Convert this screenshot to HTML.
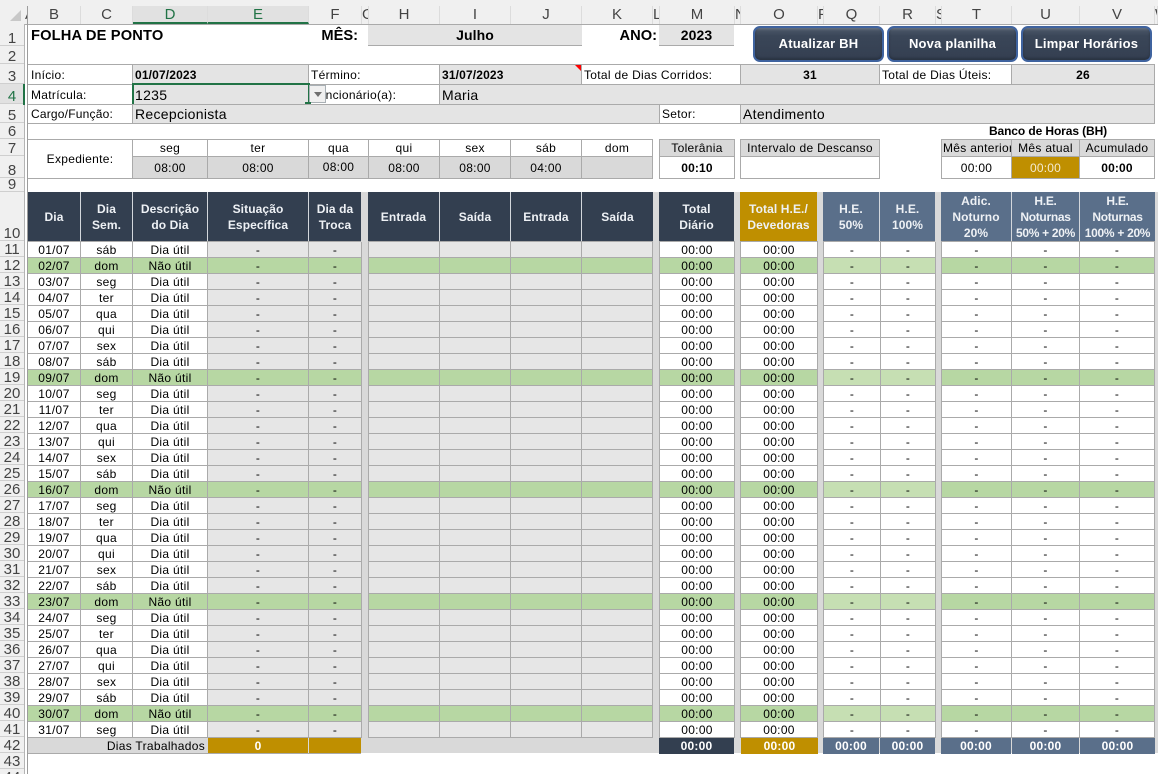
<!DOCTYPE html>
<html lang="pt-BR"><head><meta charset="utf-8"><title>Folha de Ponto</title>
<style>
html{margin:0;padding:0;background:#fff;width:1158px;height:774px;overflow:hidden}
body{margin:0;padding:0;background:#fff;position:relative;width:1158px;height:774px;overflow:hidden;font:12px "Liberation Sans",Arial,sans-serif;letter-spacing:.3px;color:#000}
.c{position:absolute;box-sizing:border-box;display:flex;align-items:center;justify-content:center;text-align:center;white-space:nowrap;overflow:hidden;line-height:16px}
.l{justify-content:flex-start;padding-left:2px}
.r{justify-content:flex-end;padding-right:3px}
.b{border:1px solid #aaa}
.g1{background:#e4e4e4}.g2{background:#d9d9d9}.w{background:#fff}
.bd{font-weight:bold;letter-spacing:.15px}.big{font-size:14px;letter-spacing:.3px}.bd.big{letter-spacing:.1px}
.h{font-weight:bold;letter-spacing:.1px;color:#eef1f5;border-right:1px solid #d3d7dc}
.dk{background:#333f50}.sl{background:#5a6f8a}.au{background:#bf8f00}
.k{color:#fff;font-weight:bold;letter-spacing:.2px}
.ch{position:absolute;top:6px;height:18px;box-sizing:border-box;font-size:15px;letter-spacing:0;color:#444;background:#f0f0f0;border-right:1px solid #dcdcdc;text-align:center;line-height:17px;overflow:hidden}
.sel{background:#e1e1e1;color:#217346;border-bottom:2px solid #217346;line-height:17px}
#rh{position:absolute;left:0;top:24px;width:24px;background:#f0f0f0}
#rh div{box-sizing:border-box;height:16px;border-bottom:1px solid #cfcfcf;font-size:15px;letter-spacing:0;color:#444;text-align:center;line-height:13px;display:flex;align-items:flex-end;justify-content:center}
table{position:absolute;left:28px;top:242px;border-collapse:separate;border-spacing:0;table-layout:fixed;width:1127px}
td{box-sizing:border-box;height:16px;padding:2px 0 0;border-right:1px solid #aaa;border-bottom:1px solid #aaa;background:#fff;text-align:center;line-height:13px;overflow:hidden;white-space:nowrap;vertical-align:top}
tr{height:16px}
td:nth-child(4),td:nth-child(5),td:nth-child(7),td:nth-child(8),td:nth-child(9),td:nth-child(10){background:#e6e6e6}
tr.d td{background:#b7d7a3}
tr.d td:nth-child(16),tr.d td:nth-child(17){background:#c6dfb3}
td:nth-child(6),td:nth-child(11),td:nth-child(13),td:nth-child(15),td:nth-child(18),tr.d td:nth-child(6),tr.d td:nth-child(11),tr.d td:nth-child(13),tr.d td:nth-child(15),tr.d td:nth-child(18){background:#d9d9d9;border-bottom-color:#d9d9d9}
.btn{position:absolute;top:26px;height:36px;box-sizing:border-box;border:2px solid #3f639f;border-radius:7px;background:linear-gradient(#66717f 0,#465263 3px,#3a4658 8px,#343f51 100%);box-shadow:inset 0 -2px 2px #2a3342;color:#fff;font-weight:bold;font-size:13px;letter-spacing:.2px;display:flex;align-items:center;justify-content:center;padding-bottom:1px}
</style></head><body>

<!-- column headers -->
<div style="position:absolute;left:0;top:0;width:1158px;height:24px;background:#f0f0f0"></div>
<div style="position:absolute;left:0;top:24px;width:1158px;height:1px;background:#aaa"></div>
<div style="position:absolute;left:10px;top:10px;width:0;height:0;border-style:solid;border-width:0 0 11px 11px;border-color:transparent transparent #c8c8c8 transparent"></div>
<div class="ch" style="left:25px;width:3px;border-right:0">A</div>
<div class="ch" style="left:28px;width:53px">B</div>
<div class="ch" style="left:81px;width:52px">C</div>
<div class="ch sel" style="left:133px;width:75px">D</div>
<div class="ch sel" style="left:208px;width:101px">E</div>
<div class="ch" style="left:309px;width:53px">F</div>
<div class="ch" style="left:362px;width:7px">G</div>
<div class="ch" style="left:369px;width:71px">H</div>
<div class="ch" style="left:440px;width:71px">I</div>
<div class="ch" style="left:511px;width:71px">J</div>
<div class="ch" style="left:582px;width:71px">K</div>
<div class="ch" style="left:653px;width:7px">L</div>
<div class="ch" style="left:660px;width:75px">M</div>
<div class="ch" style="left:735px;width:6px">N</div>
<div class="ch" style="left:741px;width:77px">O</div>
<div class="ch" style="left:818px;width:6px">P</div>
<div class="ch" style="left:824px;width:56px">Q</div>
<div class="ch" style="left:880px;width:56px">R</div>
<div class="ch" style="left:936px;width:6px">S</div>
<div class="ch" style="left:942px;width:70px">T</div>
<div class="ch" style="left:1012px;width:68px">U</div>
<div class="ch" style="left:1080px;width:75px">V</div>
<div class="ch" style="left:1155px;width:3px">W</div>

<!-- row headers -->
<div id="rh">
<div style="height:22px">1</div><div style="height:18px">2</div><div style="height:20px">3</div>
<div style="height:20px;background:#e1e1e1;color:#217346">4</div>
<div style="height:19px">5</div><div>6</div><div style="height:17px">7</div><div style="height:22px">8</div><div style="height:14px">9</div><div style="height:49px">10</div>
<div>11</div><div>12</div><div>13</div><div>14</div><div>15</div><div>16</div><div>17</div><div>18</div><div>19</div><div>20</div><div>21</div><div>22</div><div>23</div><div>24</div><div>25</div><div>26</div><div>27</div><div>28</div><div>29</div><div>30</div><div>31</div><div>32</div><div>33</div><div>34</div><div>35</div><div>36</div><div>37</div><div>38</div><div>39</div><div>40</div><div>41</div><div>42</div><div>43</div><div>44</div>
</div>
<div style="position:absolute;left:24px;top:24px;width:1px;height:750px;background:#b4b4b4"></div>
<div style="position:absolute;left:23px;top:84px;width:2px;height:21px;background:#217346"></div>

<!-- row 1 -->
<div class="c l bd" style="left:28px;top:26px;width:200px;height:20px;font-size:14.67px;letter-spacing:.15px;padding-left:3px">FOLHA DE PONTO</div>
<div class="c r bd" style="left:300px;top:26px;width:60px;height:20px;font-size:14.67px;letter-spacing:0;padding-right:2px">MÊS:</div>
<div class="c g1 bd big" style="left:368px;top:25px;width:214px;height:21px;border-bottom:1px solid #aaa">Julho</div>
<div class="c r bd" style="left:600px;top:26px;width:59px;height:20px;font-size:14.67px;letter-spacing:0;padding-right:2px">ANO:</div>
<div class="c g1 bd big" style="left:659px;top:25px;width:75px;height:21px;border-bottom:1px solid #aaa">2023</div>
<div class="btn" style="left:753px;width:131px">Atualizar BH</div>
<div class="btn" style="left:887px;width:131px">Nova planilha</div>
<div class="btn" style="left:1021px;width:131px">Limpar Horários</div>

<!-- row 3 -->
<div class="c l b w" style="left:27px;top:64px;width:106px;height:21px;padding-left:3px">Início:</div>
<div class="c l b g1 bd" style="left:132px;top:64px;width:177px;height:21px">01/07/2023</div>
<div class="c l b w" style="left:308px;top:64px;width:132px;height:21px">Término:</div>
<div class="c l b g1 bd" style="left:439px;top:64px;width:143px;height:21px">31/07/2023</div>
<div style="position:absolute;left:575px;top:65px;width:0;height:0;border-style:solid;border-width:0 6px 6px 0;border-color:transparent #f00 transparent transparent"></div>
<div class="c l b w" style="left:581px;top:64px;width:160px;height:21px">Total de Dias Corridos:</div>
<div class="c b g1 bd" style="left:740px;top:64px;width:140px;height:21px">31</div>
<div class="c l b w" style="left:879px;top:64px;width:133px;height:21px">Total de Dias Úteis:</div>
<div class="c b g1 bd" style="left:1011px;top:64px;width:144px;height:21px">26</div>

<!-- row 4 -->
<div class="c l b w" style="left:27px;top:84px;width:106px;height:21px;padding-left:3px">Matrícula:</div>
<div class="c l b g1 big" style="left:132px;top:84px;width:177px;height:21px">1235</div>
<div class="c l b w" style="left:308px;top:84px;width:132px;height:21px">Funcionário(a):</div>
<div class="c l b g1 big" style="left:439px;top:84px;width:716px;height:21px">Maria</div>
<div style="position:absolute;left:132px;top:83px;width:178px;height:23px;box-sizing:border-box;border:2px solid #217346"></div>
<div style="position:absolute;left:309px;top:85px;width:17px;height:18px;box-sizing:border-box;background:#f0f0f0;border:1px solid #a9b0b5"></div>
<div style="position:absolute;left:314px;top:92px;width:0;height:0;border-style:solid;border-width:5px 4px 0 4px;border-color:#707070 transparent transparent transparent"></div>
<div style="position:absolute;left:305px;top:102px;width:6px;height:5px;background:#217346"></div>

<!-- row 5 -->
<div class="c l b w" style="left:27px;top:104px;width:106px;height:20px;padding-left:3px;letter-spacing:.2px">Cargo/Função:</div>
<div class="c l b g1 big" style="left:132px;top:104px;width:528px;height:20px">Recepcionista</div>
<div class="c l b w" style="left:659px;top:104px;width:82px;height:20px">Setor:</div>
<div class="c l b g1 big" style="left:740px;top:104px;width:415px;height:20px">Atendimento</div>

<!-- rows 6-8 -->
<div class="c b w" style="left:27px;top:139px;width:106px;height:40px">Expediente:</div>
<div class="c b w" style="left:132px;top:139px;width:76px;height:18px">seg</div>
<div class="c b w" style="left:207px;top:139px;width:102px;height:18px">ter</div>
<div class="c b w" style="left:308px;top:139px;width:61px;height:18px">qua</div>
<div class="c b w" style="left:368px;top:139px;width:72px;height:18px">qui</div>
<div class="c b w" style="left:439px;top:139px;width:72px;height:18px">sex</div>
<div class="c b w" style="left:510px;top:139px;width:72px;height:18px">sáb</div>
<div class="c b w" style="left:581px;top:139px;width:72px;height:18px">dom</div>
<div class="c b g2" style="left:132px;top:156px;width:76px;height:23px">08:00</div>
<div class="c b g2" style="left:207px;top:156px;width:102px;height:23px">08:00</div>
<div class="c b g2" style="left:308px;top:156px;width:61px;height:23px;padding-bottom:2px">08:00</div>
<div class="c b g2" style="left:368px;top:156px;width:72px;height:23px">08:00</div>
<div class="c b g2" style="left:439px;top:156px;width:72px;height:23px">08:00</div>
<div class="c b g2" style="left:510px;top:156px;width:72px;height:23px">04:00</div>
<div class="c b g2" style="left:581px;top:156px;width:72px;height:23px"></div>

<div class="c b g2" style="left:659px;top:139px;width:76px;height:18px">Tolerânia</div>
<div class="c b w bd" style="left:659px;top:156px;width:76px;height:23px">00:10</div>
<div class="c b g2" style="left:740px;top:139px;width:140px;height:18px">Intervalo de Descanso</div>
<div class="c b w" style="left:740px;top:156px;width:140px;height:23px"></div>

<div class="c bd" style="left:960px;top:123px;width:176px;height:16px;letter-spacing:-.1px">Banco de Horas (BH)</div>
<div class="c b g2" style="left:941px;top:139px;width:71px;height:18px;justify-content:flex-start;padding-left:1px">Mês anterior</div>
<div class="c b g2" style="left:1011px;top:139px;width:69px;height:18px">Mês atual</div>
<div class="c b g2" style="left:1079px;top:139px;width:76px;height:18px">Acumulado</div>
<div class="c b w" style="left:941px;top:156px;width:71px;height:23px">00:00</div>
<div class="c b au k" style="left:1011px;top:156px;width:69px;height:23px;font-weight:normal;color:#f4ead0">00:00</div>
<div class="c b w bd" style="left:1079px;top:156px;width:76px;height:23px">00:00</div>

<!-- grey backdrop -->
<div style="position:absolute;left:28px;top:192px;width:1130px;height:561px;background:#d9d9d9"></div>

<!-- table headers -->
<div class="c h dk" style="left:28px;top:192px;width:53px;height:49px">Dia</div>
<div class="c h dk" style="left:81px;top:192px;width:52px;height:49px">Dia<br>Sem.</div>
<div class="c h dk" style="left:133px;top:192px;width:75px;height:49px">Descrição<br>do Dia</div>
<div class="c h dk" style="left:208px;top:192px;width:101px;height:49px">Situação<br>Específica</div>
<div class="c h dk" style="left:309px;top:192px;width:52px;height:49px;border-right:0">Dia da<br>Troca</div>
<div class="c h dk" style="left:368px;top:192px;width:72px;height:49px">Entrada</div>
<div class="c h dk" style="left:440px;top:192px;width:71px;height:49px">Saída</div>
<div class="c h dk" style="left:511px;top:192px;width:71px;height:49px">Entrada</div>
<div class="c h dk" style="left:582px;top:192px;width:71px;height:49px;border-right:0">Saída</div>
<div class="c h dk" style="left:659px;top:192px;width:75px;height:49px;border-right:0">Total<br>Diário</div>
<div class="c h au" style="left:740px;top:192px;width:77px;height:49px;border-right:0">Total H.E./<br>Devedoras</div>
<div class="c h sl" style="left:823px;top:192px;width:57px;height:49px">H.E.<br>50%</div>
<div class="c h sl" style="left:880px;top:192px;width:55px;height:49px;border-right:0">H.E.<br>100%</div>
<div class="c h sl" style="left:941px;top:192px;width:71px;height:49px">Adic.<br>Noturno<br>20%</div>
<div class="c h sl" style="left:1012px;top:192px;width:68px;height:49px;letter-spacing:-.3px">H.E.<br>Noturnas<br>50% + 20%</div>
<div class="c h sl" style="left:1080px;top:192px;width:75px;height:49px;border-right:0;letter-spacing:-.3px">H.E.<br>Noturnas<br>100% + 20%</div>
<div style="position:absolute;left:28px;top:241px;width:333px;height:1px;background:#aaa"></div>
<div style="position:absolute;left:368px;top:241px;width:285px;height:1px;background:#aaa"></div>
<div style="position:absolute;left:659px;top:241px;width:76px;height:1px;background:#aaa"></div>
<div style="position:absolute;left:740px;top:241px;width:78px;height:1px;background:#aaa"></div>
<div style="position:absolute;left:823px;top:241px;width:112px;height:1px;background:#aaa"></div>
<div style="position:absolute;left:941px;top:241px;width:214px;height:1px;background:#aaa"></div>

<!-- data -->
<table>
<colgroup><col style="width:53px"><col style="width:52px"><col style="width:75px"><col style="width:101px"><col style="width:53px"><col style="width:7px"><col style="width:71px"><col style="width:71px"><col style="width:71px"><col style="width:71px"><col style="width:7px"><col style="width:75px"><col style="width:6px"><col style="width:77px"><col style="width:6px"><col style="width:57px"><col style="width:55px"><col style="width:6px"><col style="width:70px"><col style="width:68px"><col style="width:75px"></colgroup>
<tr><td>01/07<td>sáb<td>Dia útil<td>-<td>-<td><td><td><td><td><td><td>00:00<td><td>00:00<td><td>-<td>-<td><td>-<td>-<td>-
<tr class="d"><td>02/07<td>dom<td>Não útil<td>-<td>-<td><td><td><td><td><td><td>00:00<td><td>00:00<td><td>-<td>-<td><td>-<td>-<td>-
<tr><td>03/07<td>seg<td>Dia útil<td>-<td>-<td><td><td><td><td><td><td>00:00<td><td>00:00<td><td>-<td>-<td><td>-<td>-<td>-
<tr><td>04/07<td>ter<td>Dia útil<td>-<td>-<td><td><td><td><td><td><td>00:00<td><td>00:00<td><td>-<td>-<td><td>-<td>-<td>-
<tr><td>05/07<td>qua<td>Dia útil<td>-<td>-<td><td><td><td><td><td><td>00:00<td><td>00:00<td><td>-<td>-<td><td>-<td>-<td>-
<tr><td>06/07<td>qui<td>Dia útil<td>-<td>-<td><td><td><td><td><td><td>00:00<td><td>00:00<td><td>-<td>-<td><td>-<td>-<td>-
<tr><td>07/07<td>sex<td>Dia útil<td>-<td>-<td><td><td><td><td><td><td>00:00<td><td>00:00<td><td>-<td>-<td><td>-<td>-<td>-
<tr><td>08/07<td>sáb<td>Dia útil<td>-<td>-<td><td><td><td><td><td><td>00:00<td><td>00:00<td><td>-<td>-<td><td>-<td>-<td>-
<tr class="d"><td>09/07<td>dom<td>Não útil<td>-<td>-<td><td><td><td><td><td><td>00:00<td><td>00:00<td><td>-<td>-<td><td>-<td>-<td>-
<tr><td>10/07<td>seg<td>Dia útil<td>-<td>-<td><td><td><td><td><td><td>00:00<td><td>00:00<td><td>-<td>-<td><td>-<td>-<td>-
<tr><td>11/07<td>ter<td>Dia útil<td>-<td>-<td><td><td><td><td><td><td>00:00<td><td>00:00<td><td>-<td>-<td><td>-<td>-<td>-
<tr><td>12/07<td>qua<td>Dia útil<td>-<td>-<td><td><td><td><td><td><td>00:00<td><td>00:00<td><td>-<td>-<td><td>-<td>-<td>-
<tr><td>13/07<td>qui<td>Dia útil<td>-<td>-<td><td><td><td><td><td><td>00:00<td><td>00:00<td><td>-<td>-<td><td>-<td>-<td>-
<tr><td>14/07<td>sex<td>Dia útil<td>-<td>-<td><td><td><td><td><td><td>00:00<td><td>00:00<td><td>-<td>-<td><td>-<td>-<td>-
<tr><td>15/07<td>sáb<td>Dia útil<td>-<td>-<td><td><td><td><td><td><td>00:00<td><td>00:00<td><td>-<td>-<td><td>-<td>-<td>-
<tr class="d"><td>16/07<td>dom<td>Não útil<td>-<td>-<td><td><td><td><td><td><td>00:00<td><td>00:00<td><td>-<td>-<td><td>-<td>-<td>-
<tr><td>17/07<td>seg<td>Dia útil<td>-<td>-<td><td><td><td><td><td><td>00:00<td><td>00:00<td><td>-<td>-<td><td>-<td>-<td>-
<tr><td>18/07<td>ter<td>Dia útil<td>-<td>-<td><td><td><td><td><td><td>00:00<td><td>00:00<td><td>-<td>-<td><td>-<td>-<td>-
<tr><td>19/07<td>qua<td>Dia útil<td>-<td>-<td><td><td><td><td><td><td>00:00<td><td>00:00<td><td>-<td>-<td><td>-<td>-<td>-
<tr><td>20/07<td>qui<td>Dia útil<td>-<td>-<td><td><td><td><td><td><td>00:00<td><td>00:00<td><td>-<td>-<td><td>-<td>-<td>-
<tr><td>21/07<td>sex<td>Dia útil<td>-<td>-<td><td><td><td><td><td><td>00:00<td><td>00:00<td><td>-<td>-<td><td>-<td>-<td>-
<tr><td>22/07<td>sáb<td>Dia útil<td>-<td>-<td><td><td><td><td><td><td>00:00<td><td>00:00<td><td>-<td>-<td><td>-<td>-<td>-
<tr class="d"><td>23/07<td>dom<td>Não útil<td>-<td>-<td><td><td><td><td><td><td>00:00<td><td>00:00<td><td>-<td>-<td><td>-<td>-<td>-
<tr><td>24/07<td>seg<td>Dia útil<td>-<td>-<td><td><td><td><td><td><td>00:00<td><td>00:00<td><td>-<td>-<td><td>-<td>-<td>-
<tr><td>25/07<td>ter<td>Dia útil<td>-<td>-<td><td><td><td><td><td><td>00:00<td><td>00:00<td><td>-<td>-<td><td>-<td>-<td>-
<tr><td>26/07<td>qua<td>Dia útil<td>-<td>-<td><td><td><td><td><td><td>00:00<td><td>00:00<td><td>-<td>-<td><td>-<td>-<td>-
<tr><td>27/07<td>qui<td>Dia útil<td>-<td>-<td><td><td><td><td><td><td>00:00<td><td>00:00<td><td>-<td>-<td><td>-<td>-<td>-
<tr><td>28/07<td>sex<td>Dia útil<td>-<td>-<td><td><td><td><td><td><td>00:00<td><td>00:00<td><td>-<td>-<td><td>-<td>-<td>-
<tr><td>29/07<td>sáb<td>Dia útil<td>-<td>-<td><td><td><td><td><td><td>00:00<td><td>00:00<td><td>-<td>-<td><td>-<td>-<td>-
<tr class="d"><td>30/07<td>dom<td>Não útil<td>-<td>-<td><td><td><td><td><td><td>00:00<td><td>00:00<td><td>-<td>-<td><td>-<td>-<td>-
<tr><td>31/07<td>seg<td>Dia útil<td>-<td>-<td><td><td><td><td><td><td>00:00<td><td>00:00<td><td>-<td>-<td><td>-<td>-<td>-
</table>
<div style="position:absolute;left:368px;top:242px;width:1px;height:496px;background:#aaa"></div>
<div style="position:absolute;left:659px;top:242px;width:1px;height:496px;background:#aaa"></div>
<div style="position:absolute;left:740px;top:242px;width:1px;height:496px;background:#aaa"></div>
<div style="position:absolute;left:823px;top:242px;width:1px;height:496px;background:#aaa"></div>
<div style="position:absolute;left:941px;top:242px;width:1px;height:496px;background:#aaa"></div>

<!-- row 42 -->
<div class="c r g2" style="left:28px;top:738px;width:180px;height:15px">Dias Trabalhados</div>
<div class="c au k" style="left:208px;top:738px;width:100px;height:15px">0</div>
<div class="c au" style="left:309px;top:738px;width:52px;height:15px"></div>
<div style="position:absolute;left:28px;top:753px;width:333px;height:1px;background:#aaa"></div>
<div class="c dk k" style="left:659px;top:738px;width:75px;height:16px">00:00</div>
<div class="c au k" style="left:741px;top:738px;width:77px;height:16px">00:00</div>
<div class="c sl k" style="left:823px;top:738px;width:56px;height:16px">00:00</div>
<div class="c sl k" style="left:880px;top:738px;width:55px;height:16px">00:00</div>
<div class="c sl k" style="left:941px;top:738px;width:70px;height:16px">00:00</div>
<div class="c sl k" style="left:1012px;top:738px;width:67px;height:16px">00:00</div>
<div class="c sl k" style="left:1080px;top:738px;width:75px;height:16px">00:00</div>

<div style="position:absolute;left:27px;top:6px;width:1px;height:768px;background:#9c9c9c"></div>
</body></html>
